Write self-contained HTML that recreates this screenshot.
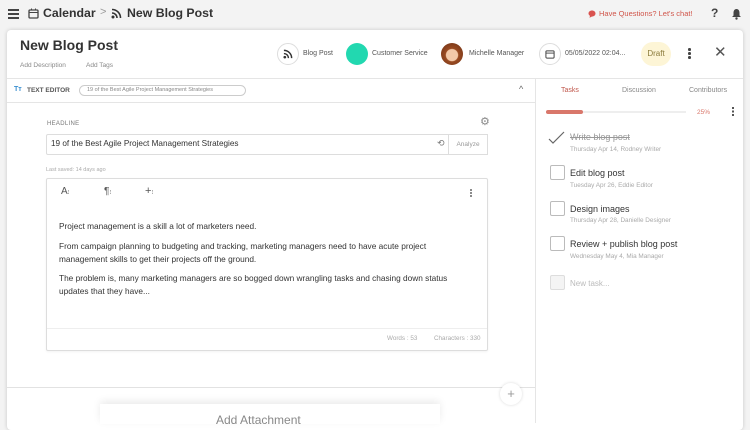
<!DOCTYPE html>
<html><head><meta charset="utf-8"><style>
*{box-sizing:border-box;margin:0;padding:0}
body{width:750px;height:423px;overflow:hidden;background:#f3f3f3;font-family:"Liberation Sans",sans-serif;color:#333;position:relative}
.a{position:absolute;white-space:nowrap}
.card{position:absolute;left:7px;top:30px;width:736px;height:400px;background:#fff;border-radius:4px;box-shadow:0 0 4px rgba(0,0,0,.18)}
.cb{position:absolute;width:15px;height:15px;border:1.3px solid #bbb;border-radius:2px;background:#fff}
.tt{font-size:9px;color:#333}
.ts{font-size:6.4px;color:#aaa}
.p{font-size:8.3px;color:#333;line-height:13.3px}
</style></head><body>
<div class="a" style="left:8px;top:9px;width:11px;height:2px;background:#444;box-shadow:0 4px 0 #444,0 8px 0 #444"></div>
<svg class="a" style="left:28px;top:8px" width="11" height="11" viewBox="0 0 11 11"><rect x="1" y="2" width="9" height="8" rx="1" fill="none" stroke="#444" stroke-width="1.3"/><line x1="1" y1="4.5" x2="10" y2="4.5" stroke="#444"/><line x1="3.5" y1="0.5" x2="3.5" y2="2.5" stroke="#444"/><line x1="7.5" y1="0.5" x2="7.5" y2="2.5" stroke="#444"/></svg>
<div class="a" style="left:43px;top:6px;font-size:12.3px;font-weight:bold;color:#333">Calendar</div>
<div class="a" style="left:100px;top:6px;font-size:11px;color:#999">&gt;</div>
<svg class="a" style="left:111px;top:8px" width="11" height="11" viewBox="0 0 11 11"><circle cx="2" cy="9" r="1.5" fill="#333"/><path d="M1 5a5 5 0 0 1 5 5M1 1.5a8.5 8.5 0 0 1 8.5 8.5" fill="none" stroke="#333" stroke-width="1.6"/></svg>
<div class="a" style="left:127px;top:6px;font-size:12.3px;font-weight:bold;color:#333">New Blog Post</div>
<svg class="a" style="left:588px;top:10px" width="8" height="8" viewBox="0 0 8 8"><path d="M4 0.5C6 0.5 7.5 1.8 7.5 3.5S6 6.5 4 6.5L1.5 7.8 2 5.8C1 5.2 0.5 4.4 0.5 3.5 0.5 1.8 2 0.5 4 0.5Z" fill="#d9534f"/></svg>
<div class="a" style="left:599px;top:9px;font-size:7.5px;color:#d0554a">Have Questions? Let's chat!</div>
<div class="a" style="left:711px;top:6px;font-size:12px;font-weight:bold;color:#444">?</div>
<svg class="a" style="left:731px;top:8px" width="11" height="12" viewBox="0 0 11 12"><path d="M5.5 1C3.3 1 2.5 3 2.5 5v2.5L1 9h9L8.5 7.5V5C8.5 3 7.7 1 5.5 1Z" fill="#444"/><circle cx="5.5" cy="10.5" r="1.2" fill="#444"/></svg>

<div class="card"></div>
<div class="a" style="left:20px;top:37px;font-size:14px;font-weight:bold;color:#333">New Blog Post</div>
<div class="a" style="left:20px;top:62px;font-size:6.5px;color:#888">Add Description</div>
<div class="a" style="left:86px;top:62px;font-size:6.5px;color:#888">Add Tags</div>
<div class="a" style="left:277px;top:43px;width:22px;height:22px;border:1px solid #ddd;border-radius:50%"></div>
<svg class="a" style="left:283px;top:49px" width="10" height="10" viewBox="0 0 11 11"><circle cx="2" cy="9" r="1.5" fill="#333"/><path d="M1 5a5 5 0 0 1 5 5M1 1.5a8.5 8.5 0 0 1 8.5 8.5" fill="none" stroke="#333" stroke-width="1.6"/></svg>
<div class="a" style="left:303px;top:50px;font-size:7px;color:#555">Blog Post</div>
<div class="a" style="left:346px;top:43px;width:22px;height:22px;border-radius:50%;background:#22d8b0"></div>
<div class="a" style="left:372px;top:50px;font-size:7px;color:#555">Customer Service</div>
<div class="a" style="left:441px;top:43px;width:22px;height:22px;border-radius:50%;background:radial-gradient(circle at 50% 55%,#f3c9a8 0 35%,#9a4b22 40%,#6b2f14 100%)"></div>
<div class="a" style="left:469px;top:50px;font-size:7px;color:#555">Michelle Manager</div>
<div class="a" style="left:539px;top:43px;width:22px;height:22px;border:1px solid #ddd;border-radius:50%"></div>
<svg class="a" style="left:545px;top:49px" width="10" height="10" viewBox="0 0 11 11"><rect x="1" y="2" width="9" height="8" rx="1" fill="none" stroke="#444" stroke-width="1.1"/><line x1="1" y1="4.5" x2="10" y2="4.5" stroke="#444"/></svg>
<div class="a" style="left:565px;top:50px;font-size:7px;color:#555">05/05/2022 02:04...</div>
<div class="a" style="left:641px;top:42px;width:30px;height:24px;border-radius:12px;background:#fdf5d6;font-size:8px;color:#8a7a3a;text-align:center;line-height:24px">Draft</div>
<div class="a" style="left:688px;top:48px;width:2.5px;height:2.5px;background:#444;border-radius:50%;box-shadow:0 4px 0 #444,0 8px 0 #444"></div>
<div class="a" style="left:714px;top:43px;font-size:15px;color:#555">✕</div>
<div class="a" style="left:7px;top:78px;width:736px;height:1px;background:#e5e5e5"></div>
<div class="a" style="left:14px;top:86px;font-size:7px;color:#3a8fd0;font-weight:bold">Tт</div>
<div class="a" style="left:27px;top:87px;font-size:6.5px;color:#555;font-weight:bold">TEXT EDITOR</div>
<div class="a" style="left:79px;top:85px;width:167px;height:11px;border:1px solid #ccc;border-radius:6px;font-size:5.5px;color:#888;line-height:9px;padding-left:7px">19 of the Best Agile Project Management Strategies</div>
<div class="a" style="left:519px;top:84px;font-size:9px;color:#666">^</div>
<div class="a" style="left:7px;top:102px;width:528px;height:1px;background:#e5e5e5"></div>
<div class="a" style="left:535px;top:78px;width:1px;height:345px;background:#e5e5e5"></div>
<div class="a" style="left:47px;top:121px;font-size:6px;color:#777;letter-spacing:.3px">HEADLINE</div>
<div class="a" style="left:480px;top:115px;font-size:11px;color:#888">⚙</div>
<div class="a" style="left:46px;top:134px;width:403px;height:21px;border:1px solid #ddd;border-radius:2px 0 0 2px"></div>
<div class="a" style="left:51px;top:139px;font-size:8.2px;color:#333">19 of the Best Agile Project Management Strategies</div>
<div class="a" style="left:437px;top:138px;font-size:9px;color:#777">⟲</div>
<div class="a" style="left:448px;top:134px;width:40px;height:21px;border:1px solid #ddd;font-size:6.5px;color:#999;text-align:center;line-height:19px">Analyze</div>
<div class="a" style="left:46px;top:167px;font-size:5.5px;color:#aaa">Last saved: 14 days ago</div>
<div class="a" style="left:46px;top:178px;width:442px;height:173px;border:1px solid #ddd;border-radius:2px;box-shadow:0 1px 2px rgba(0,0,0,.05)"></div>
<div class="a" style="left:61px;top:186px;font-size:10px;color:#555">A<span style="font-size:6px">⁝</span></div>
<div class="a" style="left:104px;top:186px;font-size:10px;color:#555">¶<span style="font-size:6px">⁝</span></div>
<div class="a" style="left:145px;top:185px;font-size:11px;color:#555">+<span style="font-size:6px">⁝</span></div>
<div class="a" style="left:470px;top:189px;width:2px;height:2px;background:#666;border-radius:50%;box-shadow:0 3px 0 #666,0 6px 0 #666"></div>
<div class="a p" style="left:59px;top:220px">Project management is a skill a lot of marketers need.</div>
<div class="a p" style="left:59px;top:240px">From campaign planning to budgeting and tracking, marketing managers need to have acute project<br>management skills to get their projects off the ground.</div>
<div class="a p" style="left:59px;top:272px">The problem is, many marketing managers are so bogged down wrangling tasks and chasing down status<br>updates that they have...</div>
<div class="a" style="left:47px;top:328px;width:440px;height:1px;background:#eee"></div>
<div class="a" style="left:387px;top:335px;font-size:6.3px;color:#aaa">Words : 53</div>
<div class="a" style="left:434px;top:335px;font-size:6.3px;color:#aaa">Characters : 330</div>
<div class="a" style="left:7px;top:387px;width:528px;height:1px;background:#e2e2e2"></div>
<div class="a" style="left:500px;top:383px;width:22px;height:22px;border-radius:50%;background:#fff;box-shadow:0 0 3px rgba(0,0,0,.15);text-align:center;font-size:13px;line-height:22px;color:#999">+</div>
<div class="a" style="left:100px;top:404px;width:340px;height:20px;background:#fff;box-shadow:0 -3px 8px rgba(0,0,0,.08)"></div>
<div class="a" style="left:216px;top:413px;font-size:12px;color:#888">Add Attachment</div>
<div class="a" style="left:561px;top:87px;font-size:7px;color:#c0574b">Tasks</div>
<div class="a" style="left:622px;top:87px;font-size:7px;color:#888">Discussion</div>
<div class="a" style="left:689px;top:87px;font-size:7px;color:#888">Contributors</div>
<div class="a" style="left:546px;top:111px;width:140px;height:2px;background:#eee"></div>
<div class="a" style="left:546px;top:110px;width:37px;height:4px;background:#d9776b;border-radius:2px"></div>
<div class="a" style="left:697px;top:109px;font-size:6.5px;color:#d9776b">25%</div>
<div class="a" style="left:732px;top:107px;width:2px;height:2px;background:#555;box-shadow:0 3.5px 0 #555,0 7px 0 #555"></div>
<svg class="a" style="left:548px;top:131px" width="17" height="14" viewBox="0 0 17 14"><path d="M1 8l4 4L16 1" fill="none" stroke="#666" stroke-width="1.2"/></svg>
<div class="a tt" style="left:570px;top:132px;color:#999;text-decoration:line-through">Write blog post</div>
<div class="a ts" style="left:570px;top:146px">Thursday Apr 14,  Rodney Writer</div>
<div class="cb" style="left:550px;top:165px"></div>
<div class="a tt" style="left:570px;top:168px">Edit blog post</div>
<div class="a ts" style="left:570px;top:182px">Tuesday Apr 26,  Eddie Editor</div>
<div class="cb" style="left:550px;top:201px"></div>
<div class="a tt" style="left:570px;top:204px">Design images</div>
<div class="a ts" style="left:570px;top:217px">Thursday Apr 28,  Danielle Designer</div>
<div class="cb" style="left:550px;top:236px"></div>
<div class="a tt" style="left:570px;top:239px">Review + publish blog post</div>
<div class="a ts" style="left:570px;top:253px">Wednesday May 4,  Mia Manager</div>
<div class="cb" style="left:550px;top:275px;background:#f4f4f4;border-color:#ddd"></div>
<div class="a" style="left:570px;top:279px;font-size:8px;color:#bbb">New task...</div>
</body></html>
